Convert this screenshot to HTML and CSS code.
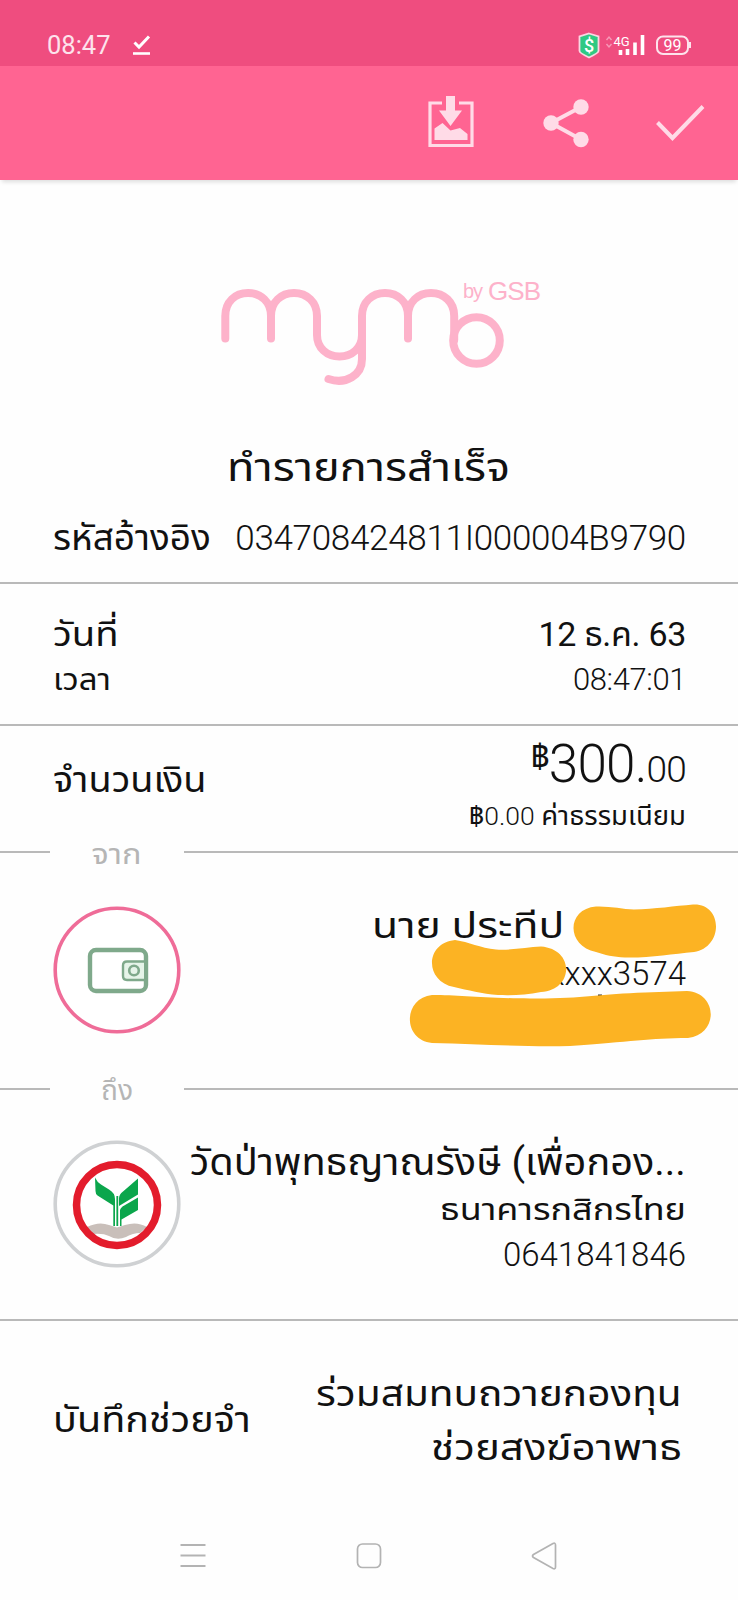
FILE: index.html
```html
<!DOCTYPE html>
<html lang="th">
<head>
<meta charset="utf-8">
<title>MyMo by GSB</title>
<link rel="stylesheet" href="styles.css">
</head>
<body>
<div class="screen">
  <header class="status">
    <span class="clock">08:47</span>
    <svg class="task" width="18" height="21" viewBox="0 0 18 21"><path d="M1.500 7.500l4.500 4.500L16 1.500" fill="none" stroke="#fff" stroke-width="3"/><path d="M0 18.500h17" stroke="#fff" stroke-width="2.600"/></svg>
    <svg class="tray" width="118" height="28" viewBox="0 0 118 28">
      <path d="M11 1.500l9.500 3v14.500q0 2-9.500 6.500q-9.500-4.500-9.500-6.500V4.500z" fill="#2fc983" stroke="#fbd5e2" stroke-width="1.800"/>
      <text class="dollar" x="11" y="19.500" text-anchor="middle">$</text>
      <path d="M28.500 8l2.500-3 2.500 3M28.500 12l2.500 3 2.500-3" fill="none" stroke="#f799b8" stroke-width="1.400"/>
      <text class="net" x="35.500" y="13.500">4G</text>
      <path d="M42.500 18v5M49.500 17v6M57 10.500V23M64.500 3v20" stroke="#fff" stroke-width="3.600"/>
      <rect x="79" y="4.500" width="31" height="17.500" rx="6" fill="none" stroke="#fde3ec" stroke-width="2"/>
      <path d="M112 10v6" stroke="#fde3ec" stroke-width="2"/>
      <text class="pct" x="94.500" y="18.500" text-anchor="middle">99</text>
    </svg>
  </header>
  <nav class="toolbar">
    <svg class="save" width="48" height="54" viewBox="0 0 48 54"><path d="M15 8H3v42.500h42V8H32" fill="none" stroke="#ffdbe7" stroke-width="3.200"/><path d="M19 1h9v14.500h7L23.500 31 12 15.500h7z" fill="#ffdbe7"/><path d="M7.500 45V33.500l8-5.500 8 7.500 9.500-2.500 7.500 6V45z" fill="#ffdbe7"/></svg>
    <svg width="48" height="50" viewBox="0 0 48 50"><path d="M40 9L10 25l30 16.500" fill="none" stroke="#ffdbe7" stroke-width="4"/><g fill="#ffdbe7"><circle cx="40" cy="9" r="7.700"/><circle cx="10" cy="25" r="7.700"/><circle cx="40" cy="41.500" r="7.700"/></g></svg>
    <svg width="50" height="38" viewBox="0 0 50 38"><path d="M2.500 18.500L17.500 34 48 2.500" fill="none" stroke="#ffdbe7" stroke-width="4"/></svg>
  </nav>
  <main>
    <section class="brand">
      <svg width="360" height="140" viewBox="0 0 360 140">
        <g fill="none" stroke="#fdb2ca" stroke-width="8" stroke-linecap="round">
          <path d="M25.300 78.500V56C25.300 42 35 33 48 33S71 42 71 56V78.500M71 56C71 42 81 33 94 33S117 42 117 56V75C117 88 127 96.500 139.500 96.500S162 88 162 75"/>
          <path d="M128.500 119C146 125 162 115 162 99V56C162 42 172 33 185 33S208 42 208 56V78.500M208 56C208 42 218 33 231 33S254.200 42 254.200 56V80"/>
          <circle cx="276.500" cy="80.500" r="23.300"/>
        </g>
        <text class="by" x="263" y="37.500" textLength="20">by</text>
        <text class="gsb" x="288" y="39.500" textLength="53">GSB</text>
      </svg>
    </section>
    <h1 class="title"><span>ทำรายการสำเร็จ</span></h1>
    <section class="row ref"><span class="ref-label">รหัสอ้างอิง</span><span class="light ref-value">034708424811I000004B9790</span></section>
    <section class="when">
      <div class="row"><span class="date-label">วันที่</span><span class="date">12 ธ.ค. 63</span></div>
      <div class="row"><span class="time-label">เวลา</span><span class="light time">08:47:01</span></div>
    </section>
    <section class="row money">
      <span class="money-label">จำนวนเงิน</span>
      <div class="sums">
        <div class="amount"><span class="baht">฿</span><span class="whole">300.</span><span class="cents">00</span></div>
        <div class="fee">฿<span class="light">0.00</span> <span class="fee-label">ค่าธรรมเนียม</span></div>
      </div>
    </section>
    <div class="divider"><span class="from-word">จาก</span></div>
    <section class="party from">
      <svg class="avatar" width="128" height="128" viewBox="0 0 128 128">
        <circle cx="64" cy="64" r="61.800" fill="#fff" stroke="#ef6c98" stroke-width="3.600"/>
        <rect x="37" y="44" width="56" height="41" rx="6" fill="none" stroke="#7fa98b" stroke-width="4.400"/>
        <path d="M91 55.500H74q-4 0-4 4v10.500q0 4 4 4h17" fill="#e6f4e9" stroke="#7fa98b" stroke-width="2.400"/>
        <circle cx="81" cy="64.500" r="4.800" fill="none" stroke="#7fa98b" stroke-width="2.600"/>
      </svg>
      <div class="lines">
        <span class="name">นาย ประทีป</span>
        <span class="light acct">xxxx3574</span>
      </div>
      <svg class="redact" width="320" height="160" viewBox="0 0 320 160">
        <path d="M198 100.500h4" stroke="#333" stroke-width="2"/>
        <g fill="#fcb323">
          <path d="M196 11.500C210 11 222 14 234 14.500C255 14 275 11 293 9.500C323 8 324 52 294 57C272 59 250 63 225 62.500C213 62 205 60 196 57C166 51 166 14 196 11.500Z"/>
          <path d="M55 45C69 47 80 53 96 54.500C112 55.500 127 52 141 51.500C175 54 174 95 141 97C126 100 112 100.500 98 100C82 99 68 95 54 92C24 86 25 48 55 45Z"/>
          <path d="M32 100C60 100 80 103 130 103.500C180 104 200 99 245 97.500L287 96C318 98 319 139 288 143C250 143 230 147 170 151C120 152 80 149 32 148C2 145 3 103 32 100Z"/>
        </g>
      </svg>
    </section>
    <div class="divider"><span class="to-word">ถึง</span></div>
    <section class="party to">
      <svg class="avatar" width="128" height="128" viewBox="0 0 128 128">
        <circle cx="64" cy="64" r="61.800" fill="#fff" stroke="#cfd1d3" stroke-width="3.600"/>
        <path d="M34 87Q46 81 56 85L64 87.500L72 85Q84 81 94 87L87 93Q80 93 73 97Q64 101 56 96Q50 93 40 94z" fill="#c9bfba"/>
        <circle cx="64" cy="65" r="40.500" fill="none" stroke="#e31c2c" stroke-width="7.500"/>
        <path d="M42 37.500Q44 42 48 44.500L56 49.500Q62 53 62 59V86H60.300V65.500L44.500 55.500Q42.500 54 42.500 51zM85 38.500V54.500L66 66V59Q66 54 70 51.500zM85 57.500V70L68.500 79.500V86H67V70Q67.500 68 69.500 66.500z" fill="#0ba64c"/>
        <path d="M64.300 56v30" stroke="#0ba64c" stroke-width="1.800"/>
      </svg>
      <div class="lines">
        <span class="payee">วัดป่าพุทธญาณรังษี (เพื่อกอง...</span>
        <span class="bank">ธนาคารกสิกรไทย</span>
        <span class="light acct">0641841846</span>
      </div>
    </section>
    <section class="row memo">
      <span class="memo-label">บันทึกช่วยจำ</span>
      <div class="note"><span class="n1">ร่วมสมทบถวายกองทุน</span><span class="n2">ช่วยสงฆ์อาพาธ</span></div>
    </section>
  </main>
  <footer class="keys">
    <svg width="26" height="26" viewBox="0 0 26 26"><path d="M.5 2h25M.5 12.500h25M.5 23h25" stroke="#b3b3b3" stroke-width="2"/></svg>
    <svg width="26" height="26" viewBox="0 0 26 26"><rect x="1.500" y="1" width="23" height="23.500" rx="5" fill="none" stroke="#b3b3b3" stroke-width="1.700"/></svg>
    <svg width="26" height="28" viewBox="0 0 26 28"><path d="M22 1.500L2.500 12.500q-2 1.500 0 3L22 26.500q2.500 1 2.500-1.500V3q0-2.500-2.500-1.500z" fill="none" stroke="#b3b3b3" stroke-width="1.700"/></svg>
  </footer>
</div>
</body>
</html>
```
FILE: styles.css
```css
* { box-sizing: border-box; margin: 0; }
body { background: #fefefe; color: #111; font-family: Roboto, "Noto Sans Thai", "Noto Sans", sans-serif; }
svg { display: block; flex: none; }
.screen { width: 738px; height: 1600px; display: flex; flex-direction: column; overflow: hidden; }
.light { font-weight: 300; }
span { white-space: nowrap; }

.status { height: 66px; background: #ef4d7f; display: flex; align-items: flex-start; padding: 32px 42px 0 47px; color: #fde3ec; }
.clock { font-size: 25.500px; line-height: 27px; width: 86px; }
.task { margin-top: 3px; }
.tray { margin: 0 0 0 auto; }
.dollar { font-size: 18px; font-weight: 500; fill: #fff; }
.net { font-size: 13px; font-weight: 400; fill: #fff; }
.pct { font-size: 16px; fill: #fff; }
.toolbar { height: 114px; background: #ff6492; display: flex; justify-content: flex-end; align-items: center; padding: 0 33px 0 0; gap: 66px; box-shadow: 0 4px 4px -2px #ddd; }
.save { margin-bottom: 3px; }

main { display: flex; flex-direction: column; }
.brand { height: 220px; padding: 80px 0 0 200px; }
.by { font: 20px "Liberation Sans", sans-serif; fill: #fdb2ca; }
.gsb { font: 26px "Liberation Sans", sans-serif; fill: #fdb2ca; }
.title { height: 100px; line-height: 136px; font-size: 39px; font-weight: 400; text-align: center; padding-right: 2px; }
.title span { display: inline-block; transform: scaleX(1.155); }
.row { display: flex; justify-content: space-between; }

/* Labels grow from their left edge, values from their right edge */
.ref-label, .date-label, .time-label, .money-label, .memo-label { transform-origin: left; }
.name, .payee, .bank, .n1, .n2 { transform-origin: right; }

.ref { height: 84px; padding: 0 52px 0 53px; line-height: 77px; border-bottom: 2px solid #b9b9b9; font-size: 35px; }
.ref-label { transform: scaleX(1.055); }
.ref-value { font-size: 35px; letter-spacing: -0.300px; }
.when { height: 142px; padding: 28px 52px 0 53px; line-height: 45px; border-bottom: 2px solid #b9b9b9; }
.date-label, .date { font-size: 34px; }
.date-label { transform: scaleX(1.125); }
.date { letter-spacing: -0.300px; }
.time-label { font-size: 30px; transform: scaleX(1.100); }
.time { font-size: 31px; letter-spacing: -0.400px; }
.money { height: 125px; padding: 0 52px 0 53px; }
.money-label { font-size: 35px; line-height: 109px; transform: scaleX(1.080); }
.sums { display: flex; flex-direction: column; align-items: flex-end; }
.amount { height: 68px; line-height: 76px; font-size: 53px; font-weight: 300; display: flex; align-items: baseline; letter-spacing: -0.800px; }
.baht { font-size: 33px; position: relative; top: -14px; font-weight: 400; }
.cents { font-size: 37px; }
.fee { font-size: 26.500px; line-height: 44px; }
.fee-label { font-size: 27.500px; }
.divider { height: 2px; display: flex; justify-content: center; background: linear-gradient(90deg, #b9b9b9 50px, transparent 50px 184px, #b9b9b9 184px); color: #b5b5b5; font-size: 28px; line-height: 6px; padding-right: 504px; }
.from-word { transform: scaleX(1.160); line-height: 8px; }
.party { position: relative; display: flex; justify-content: space-between; padding: 0 52px 0 53px; }
.lines { display: flex; flex-direction: column; align-items: flex-end; }
.from { height: 235px; }
.from .avatar { margin: 53px 0 0 0; }
.from .lines { padding: 51px 0 0; line-height: 45px; }
.from .name { font-size: 36px; margin-right: 122px; transform: scaleX(1.185); }
.acct { font-size: 33px; }
.from .acct { line-height: 49px; }
.redact { position: absolute; left: 400px; top: 42px; }
.to { height: 231px; border-bottom: 2px solid #b9b9b9; }
.to .avatar { margin: 50px 0 0 0; }
.to .lines { line-height: 45px; padding-top: 50px; }
.payee { font-size: 38px; transform: scaleX(1.045); }
.to .bank { font-size: 31px; line-height: 49px; transform: scaleX(1.160); }
.to .acct { line-height: 41px; }
.memo { height: 195px; padding: 0 56px 0 53px; }
.memo-label { font-size: 35px; line-height: 199px; transform: scaleX(1.130); }
.note { display: flex; flex-direction: column; align-items: flex-end; font-size: 36px; line-height: 54px; padding-top: 46px; }
.n1 { transform: scaleX(1.126); }
.n2 { transform: scaleX(1.167); }
.keys { display: flex; align-items: center; height: 84px; padding: 0 181px 4px 180px; justify-content: space-between; }
```
